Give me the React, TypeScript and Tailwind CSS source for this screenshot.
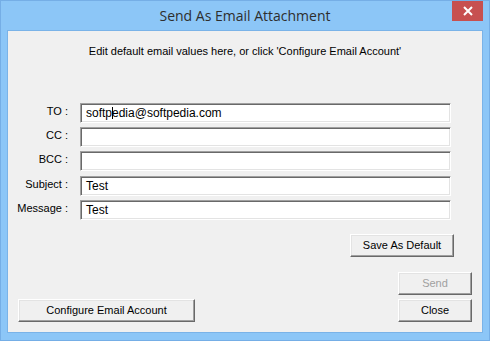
import React from "react";

const ui = { fontFamily: "'Liberation Sans', Arial, sans-serif" };

function Field({ label, value, cursorAt }: { label: string; value: string; cursorAt?: number }) {
  return (
    <div className="flex items-center h-[20px]">
      <div className="w-[61px] text-right text-[11px] text-black pr-[1px] -mt-[2px]" style={ui}>
        {label}
      </div>
      <div className="ml-[11px] w-[371px] h-[20px] border-t border-l border-[#a0a0a0] border-b border-r border-b-white border-r-white bg-white shadow-[inset_1px_1px_0_#696969,inset_-1px_-1px_0_#e3e3e3]">
        <div className="pl-[5px] pt-[2px] text-[12px] leading-[15px] text-black whitespace-pre" style={ui}>
          {cursorAt !== undefined ? (
            <>
              {value.slice(0, cursorAt)}
              <span className="inline-block w-[1px] h-[12px] bg-black align-middle -mx-[0.5px]" />
              {value.slice(cursorAt)}
            </>
          ) : (
            value
          )}
        </div>
      </div>
    </div>
  );
}

function Btn({ children, w, disabled }: { children: React.ReactNode; w: number; disabled?: boolean }) {
  return (
    <div
      className={`h-[23px] flex items-center justify-center bg-[#f0f0f0] border-t border-l border-white border-b border-r border-b-[#696969] border-r-[#696969] shadow-[inset_-1px_-1px_0_#a0a0a0,inset_1px_1px_0_#e3e3e3] text-[11px] ${disabled ? "text-[#a0a0a0]" : "text-black"}`}
      style={{ ...ui, width: w }}
    >
      {children}
    </div>
  );
}

export default function App() {
  return (
    <div className="w-[490px] h-[341px] bg-[#8cc6f7] border border-[#75aee6] flex flex-col relative overflow-hidden">
      <div className="h-[29px] relative flex items-center justify-center">
        <div className="text-[14px] text-[#2e2e2e] -mt-[1px]" style={{ fontFamily: "'Open Sans', 'Noto Sans', sans-serif" }}>
          Send As Email Attachment
        </div>
        <div className="absolute right-[6px] top-0 w-[31px] h-[20px] bg-[#c75050] flex items-center justify-center">
          <svg width="10" height="10" viewBox="0 0 10 10">
            <path d="M1 1 L9 9 M9 1 L1 9" stroke="white" strokeWidth="2" />
          </svg>
        </div>
      </div>
      <div className="mx-[6px] mb-[7px] flex-1 bg-[#f0f0f0] border border-[#7ab3e8] flex flex-col">
        <div className="mt-[12px] text-center text-[11px] text-black" style={ui}>
          Edit default email values here, or click 'Configure Email Account'
        </div>
        <div className="mt-[43px] flex flex-col gap-[4px]">
          <Field label="TO :" value="softpedia@softpedia.com" cursorAt={5} />
          <Field label="CC :" value="" />
          <Field label="BCC :" value="" />
          <div className="h-[1px] -mt-[4px]" />
          <Field label="Subject :" value="Test" />
          <Field label="Message :" value="Test" />
        </div>
        <div className="mt-[14px] flex justify-end pr-[28px]">
          <Btn w={104}>Save As Default</Btn>
        </div>
        <div className="mt-[15px] flex justify-end pr-[10px]">
          <Btn w={74} disabled>
            Send
          </Btn>
        </div>
        <div className="mt-[4px] flex justify-between pl-[10px] pr-[10px]">
          <Btn w={177}>Configure Email Account</Btn>
          <Btn w={74}>Close</Btn>
        </div>
      </div>
    </div>
  );
}
